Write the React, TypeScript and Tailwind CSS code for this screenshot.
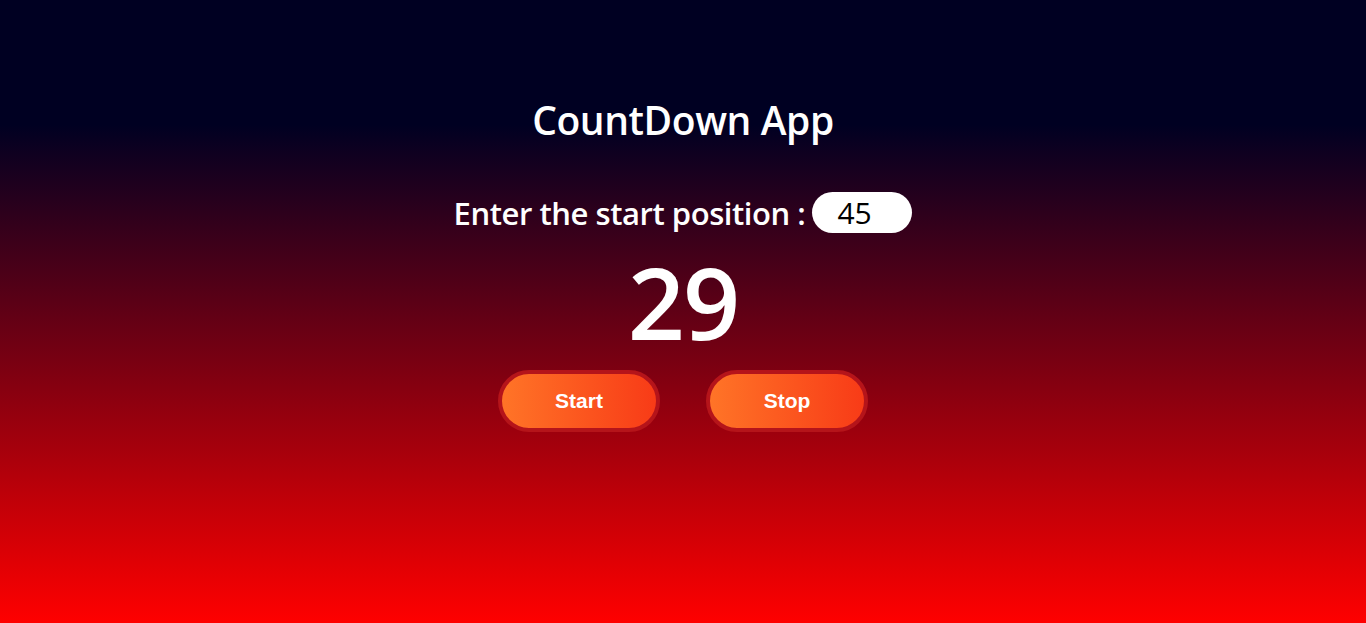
import React from "react";

export default function App() {
  return (
    <div
      className="w-full h-[623px] flex flex-col items-center bg-[linear-gradient(to_bottom,#000022_20%,#ff0000_100%)] text-white"
      style={{ fontFamily: '"Open Sans", "Noto Sans", sans-serif' }}
    >
      <h1 className="mt-[97px] text-[39px] leading-[46px] font-semibold tracking-[-0.4px]">CountDown App</h1>
      <div className="mt-[49px] flex items-center gap-[7px]">
        <span className="text-[31px] font-semibold leading-[40px] tracking-[-0.45px]">Enter the start position :</span>
        <div className="w-[100px] h-[41px] bg-white rounded-full flex items-center pl-[25px] text-black text-[30px] leading-none">
          45
        </div>
      </div>
      <div className="mt-[9px] text-[100px] leading-[118px] font-semibold tracking-[-2px]">29</div>
      <div className="mt-[10px] flex gap-[46px]" style={{ fontFamily: '"Liberation Sans", Arial, sans-serif' }}>
        <button className="w-[162px] h-[62px] rounded-full border-[4px] border-[#b5141a] bg-[linear-gradient(to_right,#ff7427,#f83b17)] text-white font-bold text-[21px]">
          Start
        </button>
        <button className="w-[162px] h-[62px] rounded-full border-[4px] border-[#b5141a] bg-[linear-gradient(to_right,#ff7427,#f83b17)] text-white font-bold text-[21px]">
          Stop
        </button>
      </div>
    </div>
  );
}
